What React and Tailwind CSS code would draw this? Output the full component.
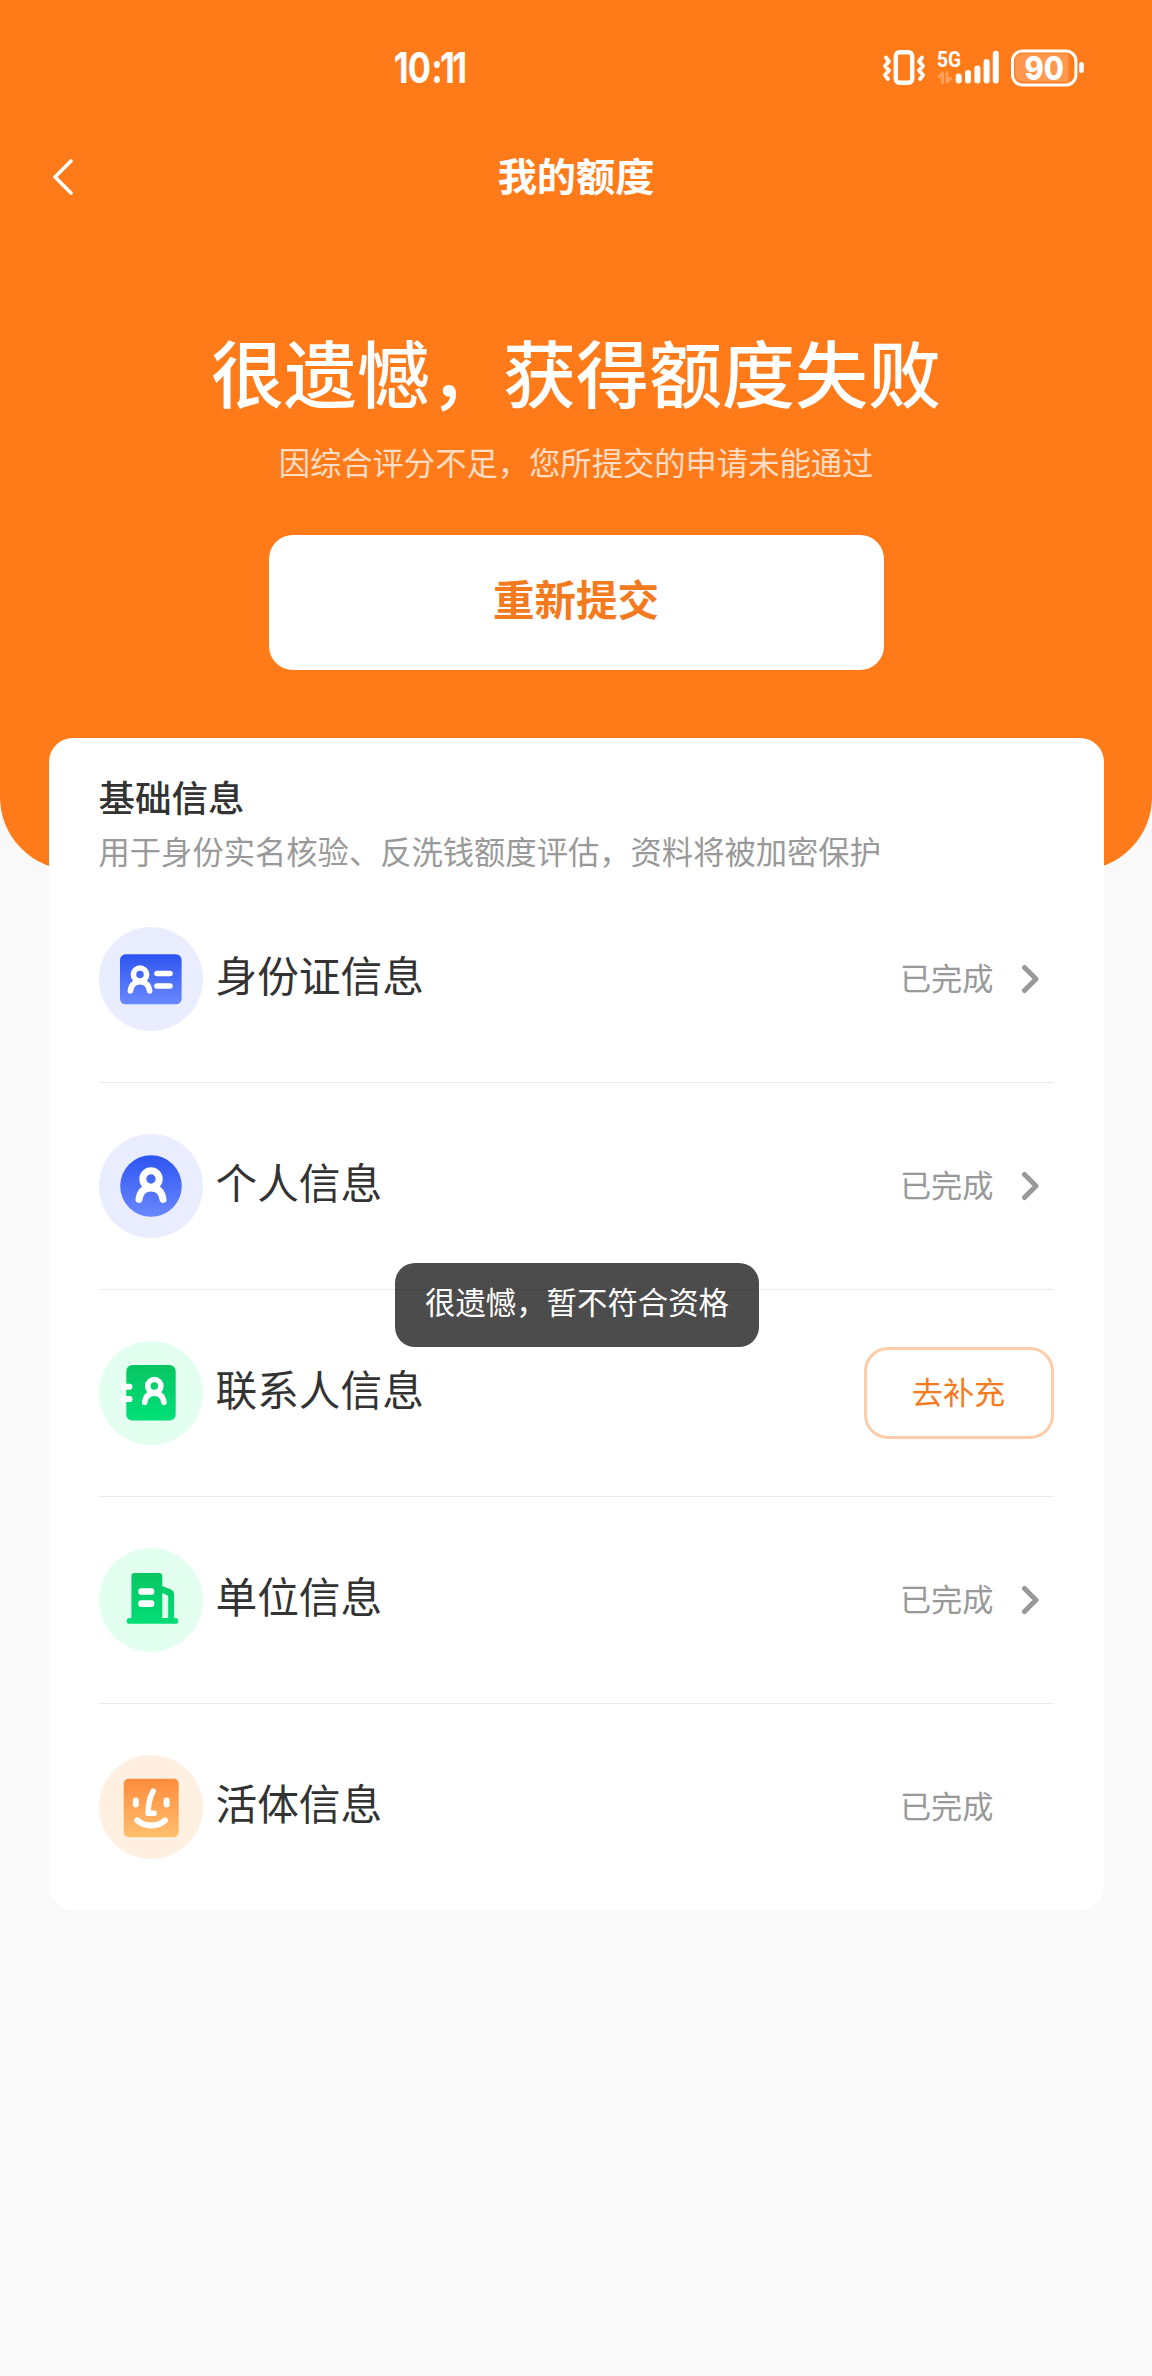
const Person = ({ x, y, scale = 1 }) => (
  <g transform={`translate(${x} ${y}) scale(${scale})`} fill="none" stroke="#fff" strokeWidth="7" strokeLinecap="round">
    <circle cx="0" cy="0" r="8.2" />
    <path d="M-12 20.4C-11 12.6-6.5 9 0 9S11 12.6 12 20.4" />
  </g>
)

const IdCardIcon = () => (
  <svg viewBox="0 0 104 104" className="size-[104px] shrink-0">
    <defs>
      <linearGradient id="idCard" x1="0" y1="0" x2="0" y2="1">
        <stop offset="0" stopColor="#2d54f0" />
        <stop offset="1" stopColor="#6a88ff" />
      </linearGradient>
    </defs>
    <circle cx="52" cy="52" r="52" fill="#e9edff" />
    <rect x="21" y="27.3" width="61.6" height="50" rx="5.5" fill="url(#idCard)" />
    <Person x={41} y={47.6} scale={0.8} />
    <path d="M58 46.5h13M58 59h13" stroke="#fff" strokeWidth="5.6" strokeLinecap="round" />
  </svg>
)

const ProfileIcon = () => (
  <svg viewBox="0 0 104 104" className="size-[104px] shrink-0">
    <defs>
      <linearGradient id="profile" x1="0" y1="0" x2="0" y2="1">
        <stop offset="0" stopColor="#2d54f0" />
        <stop offset="1" stopColor="#6a88ff" />
      </linearGradient>
    </defs>
    <circle cx="52" cy="52" r="52" fill="#e9edff" />
    <circle cx="52" cy="52" r="30.8" fill="url(#profile)" />
    <Person x={52} y={45} />
  </svg>
)

const ContactsIcon = () => (
  <svg viewBox="0 0 104 104" className="size-[104px] shrink-0">
    <defs>
      <linearGradient id="contacts" x1="0" y1="0" x2="0" y2="1">
        <stop offset="0" stopColor="#08c563" />
        <stop offset="1" stopColor="#00e078" />
      </linearGradient>
    </defs>
    <circle cx="52" cy="52" r="52" fill="#e2fff0" />
    <rect x="27.3" y="24" width="49.4" height="55.4" rx="6" fill="url(#contacts)" />
    <Person x={55.3} y={45} scale={0.8} />
    <path d="M24.5 45.7h6M24.5 58h6" stroke="#fff" strokeWidth="6" strokeLinecap="round" />
  </svg>
)

const CompanyIcon = () => (
  <svg viewBox="0 0 104 104" className="size-[104px] shrink-0">
    <defs>
      <linearGradient id="company" x1="0" y1="25" x2="0" y2="76" gradientUnits="userSpaceOnUse">
        <stop offset="0" stopColor="#08c563" />
        <stop offset="1" stopColor="#00de76" />
      </linearGradient>
    </defs>
    <circle cx="52" cy="52" r="52" fill="#e2fff0" />
    <g fill="url(#company)">
      <path d="M35.6 25h24.5a3.2 3.2 0 0 1 3.2 3.2V38l9.2 3.8a4 4 0 0 1 2.5 3.7V73H32.4V28.2a3.2 3.2 0 0 1 3.2-3.2z" />
      <rect x="27.7" y="70" width="51.6" height="5.8" rx="2.9" />
    </g>
    <path d="M63.3 45l4.5 1.9a2 2 0 0 1 1.4 1.9V70h-5.9z" fill="#e2fff0" />
    <rect x="39.3" y="40.2" width="16" height="6.6" rx="2.8" fill="#fff" />
    <rect x="39.3" y="52.3" width="16" height="6.6" rx="2.8" fill="#fff" />
  </svg>
)

const FaceIcon = () => (
  <svg viewBox="0 0 104 104" className="size-[104px] shrink-0">
    <defs>
      <linearGradient id="face" x1="0" y1="0" x2="0" y2="1">
        <stop offset="0" stopColor="#ff8b3d" />
        <stop offset="1" stopColor="#ffbf6e" />
      </linearGradient>
    </defs>
    <circle cx="52" cy="52" r="52" fill="#fff0e1" />
    <rect x="24.7" y="23.7" width="55" height="58.6" rx="5" fill="url(#face)" />
    <g fill="none" stroke="#fff" strokeWidth="6" strokeLinecap="round" strokeLinejoin="round">
      <path d="M36.8 45.4v4M67.6 45.4v4" />
      <path d="M54.2 36.2C50.8 42 49.2 49 49.1 58.2h6" strokeWidth="5.6" />
      <path d="M38.4 65.4C45.5 72.2 59 72.2 66 65.4" />
    </g>
  </svg>
)

const Clock = () => (
  <svg viewBox="0 0 76 44" className="h-11 w-[76px] overflow-visible">
    <text
      transform="scale(.82 1)"
      x="-0.2 16.8 45.4 56.2 71"
      y="37.4"
      fill="#fff"
      fontFamily="Inter, sans-serif"
      fontWeight="700"
      fontSize="42"
    >
      10:11
    </text>
  </svg>
)

const StatusIcons = () => (
  <svg viewBox="0 0 206 44" className="mb-0.5 h-11 w-[206px]">
    <g fill="none" stroke="#fff" strokeLinecap="round" strokeLinejoin="round">
      {/* vibrate */}
      <rect x="15.8" y="7.3" width="16.4" height="30.4" rx="3.6" strokeWidth="4.4" />
      <path d="M6 12.5l3 4-4 4.5 4 4.5-4 4.5 3 4M42 12.5l-3 4 4 4.5-4 4.5 4 4.5-3 4" strokeWidth="3.8" />
      {/* signal */}
      <path d="M78.7 31.6v3.8M88 28v7.4M97.4 23.6v11.8M106.6 17v18.4M115.8 8.8v26.6" strokeWidth="6" />
      <path d="M59 32l3.6-4v9.6M67 27.5v9.6l3.6-4" strokeWidth="2.8" opacity=".3" />
      {/* battery */}
      <rect x="132.5" y="6" width="63.4" height="34" rx="10" strokeWidth="3" />
    </g>
    <path d="M143 8.5h45.5v28.4H143a8 8 0 0 1-8-8V16.5a8 8 0 0 1 8-8z" fill="#fff" opacity=".22" />
    <rect x="199.2" y="17" width="4.6" height="11" rx="2.3" fill="#fff" />
    <text x="57" y="22" fill="#fff" fontFamily="Roboto, sans-serif" fontWeight="700" fontSize="22.5" textLength="24" lengthAdjust="spacingAndGlyphs">5G</text>
    <text x="144.5" y="34.5" fill="#fff" fontFamily="Inter, sans-serif" fontWeight="800" fontSize="32.5" textLength="39.5" lengthAdjust="spacingAndGlyphs">90</text>
  </svg>
)

const rows = [
  { label: '身份证信息', icon: IdCardIcon, status: 'done', link: true },
  { label: '个人信息', icon: ProfileIcon, status: 'done', link: true },
  { label: '联系人信息', icon: ContactsIcon, status: 'todo' },
  { label: '单位信息', icon: CompanyIcon, status: 'done', link: true },
  { label: '活体信息', icon: FaceIcon, status: 'done', link: false }
]

const InfoRow = ({ label, icon: Icon, status, link }) => (
  <li className="flex h-[207px] items-start border-b border-[#ececec] pt-[51px] last:h-[206px] last:border-b-0">
    <div className="flex h-[104px] w-full items-center">
      <Icon />
      <span className="ml-[13px] flex-1 pb-2 text-[41.7px] leading-none text-[#333]">{label}</span>
      {status === 'todo' ? (
        <button className="h-[92px] w-[190px] rounded-3xl border-3 border-[#fbcdaa] pb-1 text-[31.2px] leading-none text-[#f47a20]">
          去补充
        </button>
      ) : (
        <>
          <span className="pb-[5px] text-[31.2px] leading-none text-[#999]">已完成</span>
          <span className="flex w-[60px] pl-[27px]">
            {link && (
              <svg viewBox="0 0 20 30" className="h-[30px] w-5" fill="none" stroke="#999" strokeWidth="5" strokeLinecap="round" strokeLinejoin="round">
                <path d="M3.5 3.5L15 15 3.5 26.5" />
              </svg>
            )}
          </span>
        </>
      )}
    </div>
  </li>
)

export default function App() {
  return (
    <div className="relative min-h-[2376px] w-[1152px] bg-[#f9f9f9] font-['Noto_Sans_CJK_SC',sans-serif]">
      <header className="h-[870px] rounded-b-[73px] bg-[#ff7b1a] text-white">
        {/* Status bar */}
        <div className="flex h-[136px] items-center justify-between pr-[66px] pl-[394px]">
          <Clock />
          <StatusIcons />
        </div>

        {/* Nav bar */}
        <div className="grid h-20 grid-cols-[100px_1fr_100px] items-center">
          <svg viewBox="0 0 24 38" className="ml-[51px] h-[38px] w-6" fill="none" stroke="#fff" strokeWidth="3.6" strokeLinecap="round" strokeLinejoin="round">
            <path d="M20 4L4 20l16 16" />
          </svg>
          <h1 className="pb-[3px] text-center text-[39.2px] leading-none font-bold">我的额度</h1>
        </div>

        <div className="flex flex-col items-center pt-[118px]">
          <h2 className="text-[73px] leading-[73px] font-medium">很遗憾&#xff0c;获得额度失败</h2>
          <p className="mt-[39px] text-[31.3px] leading-8 text-white/75">因综合评分不足&#xff0c;您所提交的申请未能通过</p>
          <button className="mt-[57px] h-[135px] w-[615px] rounded-3xl bg-white pb-2 text-[41.5px] leading-none font-bold text-[#f47a20]">
            重新提交
          </button>
        </div>
      </header>

      <main className="relative mx-auto -mt-[132px] h-[1172px] w-[1055px] rounded-3xl bg-white px-[50px] pt-[39px]">
        <h3 className="text-[36.5px] leading-10 font-medium text-[#333]">基础信息</h3>
        <p className="mt-4 text-[31.3px] leading-9 text-[#999]">用于身份实名核验、反洗钱额度评估&#xff0c;资料将被加密保护</p>
        <ul className="mt-[7px]">
          {rows.map((row) => (
            <InfoRow key={row.label} {...row} />
          ))}
        </ul>
      </main>

      {/* Toast */}
      <div className="absolute top-[1263px] left-[395px] flex h-[84px] w-[364px] items-center justify-center rounded-[20px] bg-black/70 pb-[7px] text-[30.4px] leading-none text-white">
        很遗憾&#xff0c;暂不符合资格
      </div>
    </div>
  )
}
